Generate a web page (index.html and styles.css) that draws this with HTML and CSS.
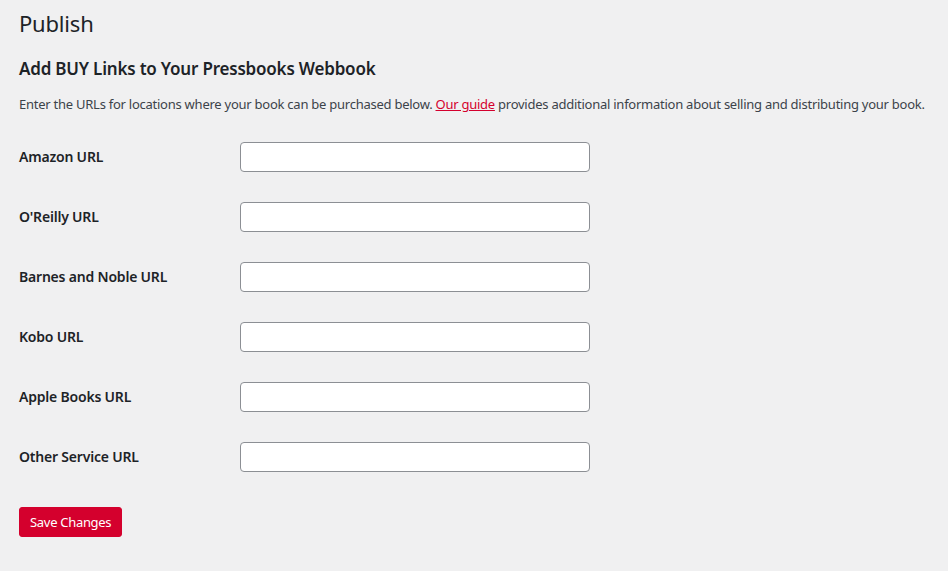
FILE: index.html
```html
<!DOCTYPE html>
<html lang="en">
<head>
<meta charset="utf-8">
<title>Publish</title>
<link rel="stylesheet" href="styles.css">
</head>
<body>
<div class="wrap">
  <h1 class="page-title">Publish</h1>
  <h2 class="section-title">Add BUY Links to Your Pressbooks Webbook</h2>
  <p class="intro">Enter the URLs for locations where your book can be purchased below. <a href="#" class="guide">Our guide</a> provides additional information about selling and distributing your book.</p>
  <form class="form">
    <div class="row"><label class="label" for="amazon">Amazon URL</label><input class="field" id="amazon" type="text"></div>
    <div class="row"><label class="label" for="oreilly">O'Reilly URL</label><input class="field" id="oreilly" type="text"></div>
    <div class="row"><label class="label" for="bn">Barnes and Noble URL</label><input class="field" id="bn" type="text"></div>
    <div class="row"><label class="label" for="kobo">Kobo URL</label><input class="field" id="kobo" type="text"></div>
    <div class="row"><label class="label" for="apple">Apple Books URL</label><input class="field" id="apple" type="text"></div>
    <div class="row"><label class="label" for="other">Other Service URL</label><input class="field" id="other" type="text"></div>
    <div class="submit"><button type="button" class="button-primary">Save Changes</button></div>
  </form>
</div>
</body>
</html>
```
FILE: styles.css
```css
html, body {
  margin: 0;
  padding: 0;
  background: #f0f0f1;
}
body {
  font-family: "Noto Sans", "Open Sans", sans-serif;
  color: #1d2327;
}
.wrap {
  padding: 0 19px;
}
.page-title {
  margin: 0;
  padding: 9px 0 0;
  font-size: 22px;
  font-weight: 400;
  line-height: 29px;
  letter-spacing: -0.2px;
}
.section-title {
  margin: 20px 0 0;
  font-size: 17px;
  font-weight: 600;
  line-height: 22px;
  letter-spacing: -0.2px;
}
.intro {
  margin: 14px 0 0;
  font-size: 13px;
  line-height: 20px;
  color: #3c434a;
  letter-spacing: -0.25px;
  white-space: nowrap;
}
.guide {
  color: #d4002d;
  text-decoration: underline;
}
.form {
  margin: 13px 0 0;
}
.row {
  display: flex;
  align-items: center;
  height: 60px;
}
.label {
  width: 221px;
  font-size: 14px;
  font-weight: 600;
  line-height: 20px;
  letter-spacing: -0.2px;
}
.field {
  box-sizing: border-box;
  width: 350px;
  height: 30px;
  margin: 0;
  padding: 0 8px;
  border: 1px solid #8c8f94;
  border-radius: 4px;
  background: #fff;
  font: 14px "Noto Sans", sans-serif;
}
.submit {
  margin-top: 20px;
}
.button-primary {
  height: 30px;
  padding: 0 10px;
  border: 1px solid #d4002d;
  border-radius: 3px;
  background: #d4002d;
  color: #fff;
  font-family: "Noto Sans", sans-serif;
  font-size: 13px;
  line-height: 28px;
  letter-spacing: -0.3px;
}
```
